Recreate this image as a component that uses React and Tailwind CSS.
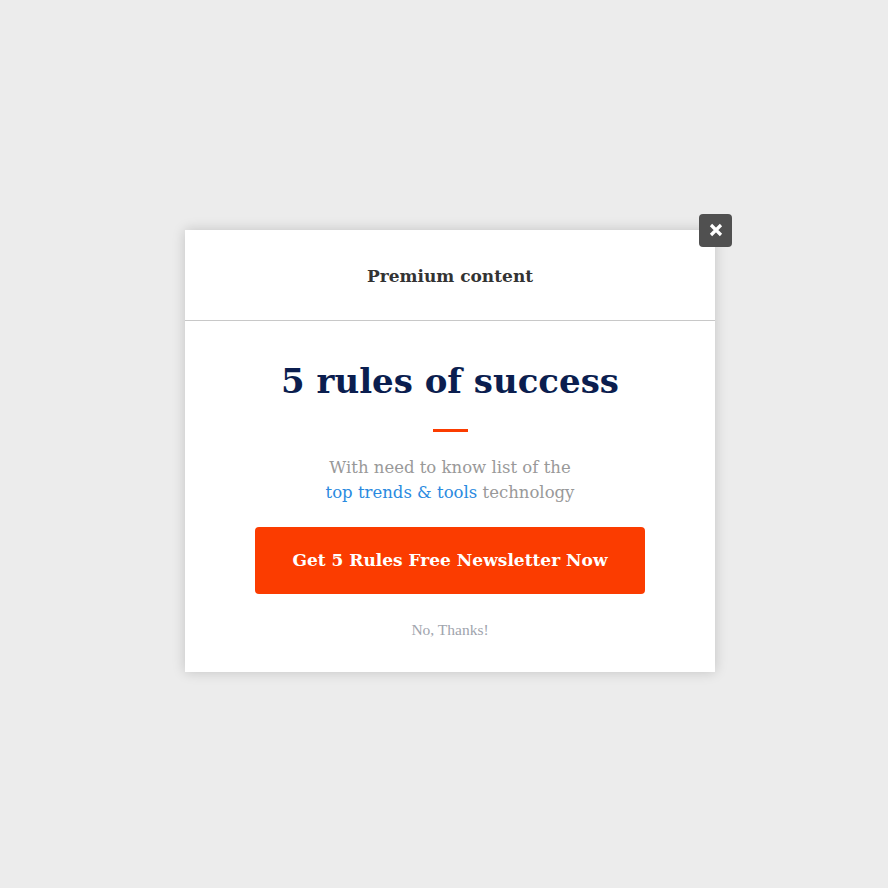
export default function App() {
  return (
    <div className="min-h-screen w-full bg-[#ececec] flex items-center justify-center font-['DejaVu_Serif',serif]">
      <div className="relative w-[530px] bg-white shadow-[0_0_12px_rgba(0,0,0,0.18)] mt-[14px] ml-[12px]">
        {/* Close */}
        <button className="absolute -top-[16px] -right-[17px] w-[33px] h-[33px] rounded-[4px] bg-[#505050] flex items-center justify-center">
          <svg width="14" height="14" viewBox="0 0 14 14">
            <path d="M2 2 L12 12 M12 2 L2 12" stroke="#fff" strokeWidth="3.2" strokeLinecap="butt" />
          </svg>
        </button>

        {/* Header */}
        <div className="h-[91px] flex items-center justify-center border-b border-[#c8c8c8]">
          <h2 className="text-[17px] font-bold text-[#333333] mt-[3px]">Premium content</h2>
        </div>

        {/* Body */}
        <div className="flex flex-col items-center pt-[34px] pb-[31px]">
          <h1 className="text-[34px] leading-[52px] font-bold text-[#0b1e4f]">5 rules of success</h1>
          <div className="w-[35px] h-[3px] bg-[#fb3c00] mt-[22px]" />
          <p className="mt-[23px] text-[16.5px] leading-[25px] text-[#999999] text-center">
            With need to know list of the
            <br />
            <span className="text-[#2a8ae0]">top trends &amp; tools</span> technology
          </p>
          <button className="mt-[22px] w-[390px] h-[67px] rounded-[4px] bg-[#fb3c00] text-white text-[17px] font-bold">
            Get 5 Rules Free Newsletter Now
          </button>
          <div className="mt-[24px] text-[15.5px] text-[#a0a4ad] font-['Liberation_Serif',serif]">No, Thanks!</div>
        </div>
      </div>
    </div>
  );
}
